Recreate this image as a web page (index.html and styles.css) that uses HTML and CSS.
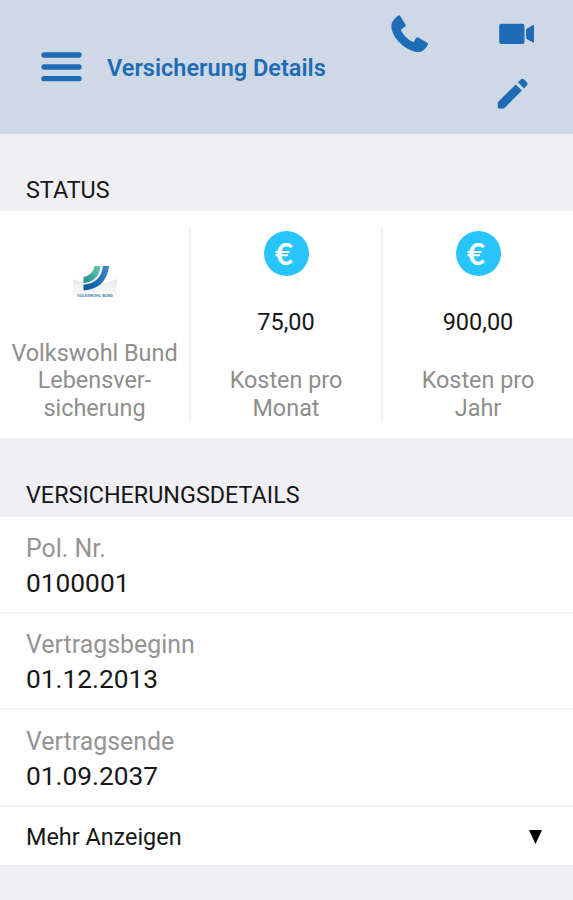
FILE: index.html
```html
<!DOCTYPE html>
<html lang="de">
<head>
<meta charset="utf-8">
<meta name="viewport" content="width=device-width, initial-scale=1">
<title>Versicherung Details</title>
<link rel="stylesheet" href="styles.css">
</head>
<body>
<header class="header">
  <button class="menu" aria-label="Menü">
    <svg width="41" height="30" viewBox="0 0 41 30" stroke="currentColor" stroke-width="5.300" stroke-linecap="round"><path d="M3 3H38M3 15H38M3 26.700H38"/></svg>
  </button>
  <h1 class="title">Versicherung Details</h1>
  <nav class="actions">
    <svg class="call" width="38" height="38" viewBox="0 0 38 38" fill="currentColor"><path d="M0.5 9.500C1 6.400 4.500 2.600 7.300 .5Q8.500 0 9.200 1L14.500 9.500Q15.100 10.700 14 11.700L9.800 14.800C12 19.800 17.400 25.400 22.700 27.200L25 23.100Q26 21.800 27.200 22.600L36.300 27.800Q37.500 28.700 36.800 30C34.800 33.400 31.500 36.700 28.600 37C15 37.500-1.200 21 .5 9.500Z"/></svg>
    <svg class="video" width="36" height="22" viewBox="0 0 36 22" fill="currentColor"><rect x=".2" y=".7" width="25.300" height="20.300" rx="2"/><path d="M27 7Q27 6.300 27.700 5.700L33.700 2.200Q35 1.500 35 2.700V18.800Q35 20 33.700 19.300L27.700 16Q27 15.400 27 14.700Z"/></svg>
    <svg class="edit" width="32" height="32" viewBox="0 0 32 32" fill="currentColor"><path d="M.8 24.300 18.700 6.400 24.900 12.600 7 30.500H2Q.8 30.500.8 29.300ZM20.900 4.200 23.700 1.400Q25.300.1 27 1.400L30 4.400Q31.100 5.900 30 7.300L27.100 10.400Z"/></svg>
  </nav>
</header>
<main>
  <h2 class="section status-heading">STATUS</h2>
  <section class="status">
    <div class="tile">
      <div class="media">
        <svg class="logo" width="46" height="36" viewBox="0 0 46 36">
          <defs>
            <linearGradient id="green" x1="0" y1="1" x2="1" y2="0"><stop stop-color="#188f91"/><stop offset="1" stop-color="#72c9ae"/></linearGradient>
            <linearGradient id="blue" x1="0" y1="1" x2="1" y2="0"><stop stop-color="#0756a0"/><stop offset="1" stop-color="#4186c5"/></linearGradient>
            <linearGradient id="paper" x1="0" y1="0" x2="0" y2="1"><stop stop-color="#e8e8e9"/><stop offset="1" stop-color="#fff"/></linearGradient>
          </defs>
          <path d="M1 14Q23 23 45 14V34H1Z" fill="url(#paper)"/>
          <path d="M22.500 1H28.600Q27 16.500 11.500 18V12Q21 10 22.500 1Z" fill="url(#green)"/>
          <path d="M31 1H37.200Q34 24 11.500 25.500V19.800Q29 18 31 1Z" fill="url(#blue)"/>
          <text x="5" y="31.500" textLength="36" lengthAdjust="spacingAndGlyphs" class="wordmark">VOLKSWOHL BUND</text>
        </svg>
      </div>
      <p class="label">Volkswohl Bund<br>Lebensver-<br>sicherung</p>
    </div>
    <div class="tile">
      <span class="euro">€</span>
      <p class="amount">75,00</p>
      <p class="label">Kosten pro<br>Monat</p>
    </div>
    <div class="tile">
      <span class="euro">€</span>
      <p class="amount">900,00</p>
      <p class="label">Kosten pro<br>Jahr</p>
    </div>
  </section>
  <h2 class="section details-heading">VERSICHERUNGSDETAILS</h2>
  <dl class="details">
    <div class="row"><dt>Pol. Nr.</dt><dd>0100001</dd></div>
    <div class="row"><dt>Vertragsbeginn</dt><dd>01.12.2013</dd></div>
    <div class="row"><dt>Vertragsende</dt><dd>01.09.2037</dd></div>
  </dl>
  <button class="more"><span>Mehr Anzeigen</span><svg width="13" height="14" viewBox="0 0 13 14"><path d="M0 0H13L6.500 14Z"/></svg></button>
</main>
</body>
</html>
```
FILE: styles.css
```css
* { box-sizing: border-box; }
body {
  margin: 0;
  background: #efeff4;
  color: #171717;
  font-family: Roboto, "Liberation Sans", sans-serif;
}
h1, h2, p, dl, dd { margin: 0; }
button {
  padding: 0;
  border: 0;
  background: none;
  color: inherit;
  font: inherit;
}
svg { display: block; }
.header {
  display: flex;
  align-items: center;
  height: 134px;
  padding-left: 41px;
  background: #cfd9e5;
  color: #1d6cb5;
}
.menu { width: 66px; }
.title {
  width: 284px;
  padding-top: 2px;
  font-size: 23.5px;
  font-weight: 600;
  line-height: 28px;
  white-space: nowrap;
}
.actions {
  display: grid;
  grid-template-columns: 106px 38px;
  grid-template-rows: 60px 60px;
  align-self: flex-start;
  padding-top: 4px;
  align-items: center;
}
.video { margin-left: 2px; }
.edit { grid-column: 2; }
.section {
  display: flex;
  align-items: flex-end;
  padding-left: 26px;
  font-size: 23.35px;
  font-weight: 400;
  line-height: 27px;
}
.status-heading { height: 77px; padding-bottom: 7px; }
.details-heading { height: 79px; padding-bottom: 8px; }
.status {
  display: grid;
  grid-template-columns: 189px 192px 192px;
  height: 227px;
  padding: 17px 0 16px;
  background: #fff;
}
.tile {
  display: flex;
  flex-direction: column;
  align-items: center;
  padding-top: 3px;
  text-align: center;
}
.tile + .tile { border-left: 2px solid #f3f3f4; }
.media { height: 108px; padding-top: 34px; }
.wordmark {
  fill: #4b8ead;
  font: 700 4px Roboto, sans-serif;
}
.euro {
  display: grid;
  place-items: center;
  width: 45px;
  height: 45px;
  padding-right: 4px;
  border-radius: 50%;
  background: #27c5fc;
  color: #fff;
  font-family: Lato, sans-serif;
  font-size: 31px;
  font-weight: 700;
  line-height: 45px;
}
.amount {
  margin-top: 31.5px;
  font-size: 23.5px;
  line-height: 28px;
}
.label {
  margin-top: auto;
  color: #8e8e8e;
  font-size: 23.4px;
  line-height: 27.5px;
}
.details { background: #fff; }
.row {
  height: 96.7px;
  padding: 14.5px 26px 0;
  border-bottom: 2px solid #f2f2f3;
}
dt {
  color: #949494;
  font-size: 24.9px;
  line-height: 34px;
}
dd { font-size: 26.3px; line-height: 35px; }
.more {
  display: flex;
  align-items: center;
  justify-content: space-between;
  width: 100%;
  height: 58px;
  padding: 2px 31px 0 26px;
  background: #fff;
  font-size: 23.4px;
}
```
